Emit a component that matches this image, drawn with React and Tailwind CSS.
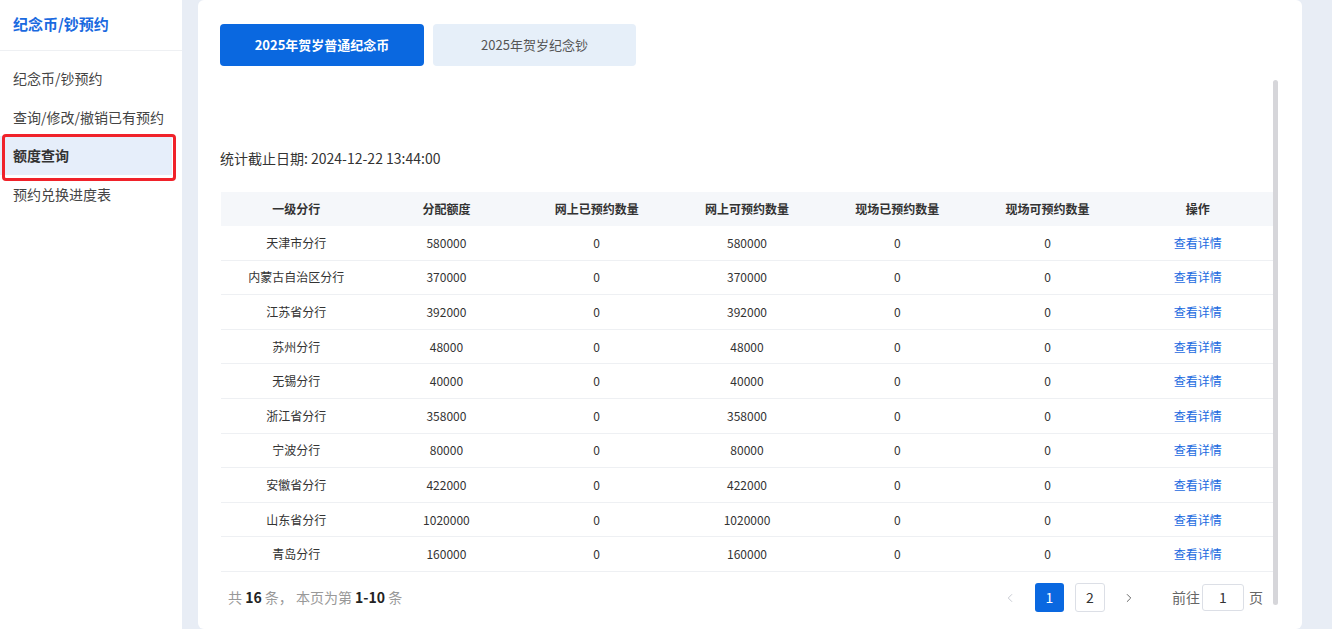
import { ChevronLeft, ChevronRight } from 'lucide-react';

const rows = [
  ['天津市分行', '580000', '0', '580000', '0', '0'],
  ['内蒙古自治区分行', '370000', '0', '370000', '0', '0'],
  ['江苏省分行', '392000', '0', '392000', '0', '0'],
  ['苏州分行', '48000', '0', '48000', '0', '0'],
  ['无锡分行', '40000', '0', '40000', '0', '0'],
  ['浙江省分行', '358000', '0', '358000', '0', '0'],
  ['宁波分行', '80000', '0', '80000', '0', '0'],
  ['安徽省分行', '422000', '0', '422000', '0', '0'],
  ['山东省分行', '1020000', '0', '1020000', '0', '0'],
  ['青岛分行', '160000', '0', '160000', '0', '0'],
];

const headers = ['一级分行', '分配额度', '网上已预约数量', '网上可预约数量', '现场已预约数量', '现场可预约数量', '操作'];

const menu = ['纪念币/钞预约', '查询/修改/撤销已有预约', '额度查询', '预约兑换进度表'];

export default function App() {
  return (
    <div
      className="flex h-[629px] w-[1332px] overflow-hidden bg-[#e8edf5] text-[#333]"
      style={{ fontFamily: '"Noto Sans CJK SC", "Liberation Sans", sans-serif' }}
    >
      <aside className="w-[182px] shrink-0 bg-white">
        <div className="h-[51px] border-b border-[#eef0f3] pl-[13px] pt-[13px] text-[15px] font-bold text-[#1a6ae0]">
          纪念币/钞预约
        </div>
        <nav className="pt-[8px]">
          {menu.map((m, i) =>
            i === 2 ? (
              <div key={m} className="relative mr-[10px] flex h-[38.7px] items-center bg-[#e6eefa] pl-[13px] text-[14px] font-bold text-[#333]">
                <span>{m}</span>
                <div className="absolute left-[2px] top-[-2px] h-[47px] w-[174px] rounded-[4px] border-[3px] border-[#f0222a]" />
              </div>
            ) : (
              <div key={m} className="flex h-[38.7px] items-center pl-[13px] text-[14px] text-[#444]">
                {m}
              </div>
            )
          )}
        </nav>
      </aside>

      <main className="ml-[16px] w-[1104px] shrink-0 rounded-[6px] bg-white">
        <div className="flex gap-[9px] pl-[22px] pt-[24px]">
          <button className="h-[42px] w-[204px] rounded-[4px] bg-[#0a68e0] text-[13px] font-bold text-white">
            2025年贺岁普通纪念币
          </button>
          <button className="h-[42px] w-[203px] rounded-[4px] bg-[#e6eff9] text-[13px] text-[#555]">
            2025年贺岁纪念钞
          </button>
        </div>

        <div className="relative">
          <div className="absolute right-[24px] top-[14px] h-[525px] w-[5px] rounded-full bg-[#d6d6da]" />
          <div className="pl-[22px] pt-[82px] text-[14px] text-[#333]">统计截止日期: 2024-12-22 13:44:00</div>

          <div className="ml-[23px] mt-[23px] w-[1052px]">
            <div className="grid h-[34px] grid-cols-7 items-center bg-[#f5f7fa] text-[12px] font-bold text-[#333]">
              {headers.map((h) => (
                <div key={h} className="text-center">{h}</div>
              ))}
            </div>
            {rows.map((r) => (
              <div key={r[0]} className="grid h-[34.6px] grid-cols-7 items-center border-b border-[#eef0f3] text-[12px] text-[#333]">
                {r.map((c, j) => (
                  <div key={j} className="text-center">{c}</div>
                ))}
                <div className="text-center text-[#1a6ae0]">查看详情</div>
              </div>
            ))}
          </div>

          <div className="flex h-[52px] items-center pl-[30px] pr-[39px] text-[14px]">
            <div className="text-[#999]">
              共 <b className="text-[#222]">16</b> 条， 本页为第 <b className="text-[#222]">1-10</b> 条
            </div>
            <div className="ml-auto flex items-center">
              <span className="flex w-[20px] justify-center text-[#c0c4cc]">
                <ChevronLeft size={14} strokeWidth={1.5} />
              </span>
              <span className="ml-[15px] flex h-[29px] w-[29px] items-center justify-center rounded-[3px] bg-[#0a68e0] text-white">1</span>
              <span className="ml-[11px] flex h-[29px] w-[30px] items-center justify-center rounded-[3px] border border-[#dcdfe6] text-[#333]">2</span>
              <span className="ml-[14px] flex w-[20px] justify-center text-[#555]">
                <ChevronRight size={14} strokeWidth={1.5} />
              </span>
              <span className="ml-[33px] text-[#666]">前往</span>
              <span className="ml-[2px] flex h-[27px] w-[42px] items-center justify-center rounded-[3px] border border-[#dcdfe6] text-[#333]">1</span>
              <span className="ml-[5px] text-[#666]">页</span>
            </div>
          </div>
        </div>
      </main>
    </div>
  );
}
